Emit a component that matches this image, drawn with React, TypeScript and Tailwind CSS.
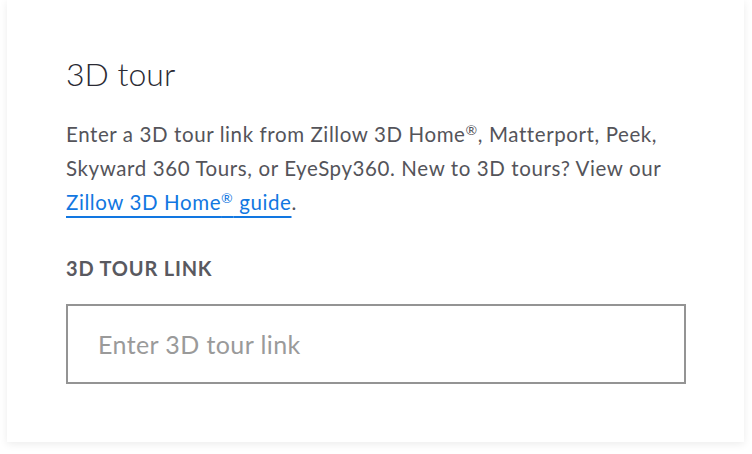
import React from 'react';

const font = { fontFamily: 'Lato, "Liberation Sans", sans-serif' };

export default function App() {
  return (
    <div className="min-h-[454px] w-[752px] bg-white" style={font}>
      <div className="ml-[7px] w-[737px] bg-white px-[59px] pt-[54px] pb-[58px] shadow-[0_2px_8px_rgba(0,0,0,0.08)]">
        <h1 className="text-[32px] font-light leading-[40px] text-[#2a2a33]">3D tour</h1>

        <p className="mt-[23px] text-[20.5px] leading-[34px] tracking-[0.6px] text-[#54545a]">
          Enter a 3D tour link from Zillow 3D Home<sup className="text-[14px]">®</sup>, Matterport, Peek,
          <br />
          Skyward 360 Tours, or EyeSpy360. New to 3D tours? View our
          <br />
          <a
            href="#"
            className="text-[#1277e1] underline decoration-2 underline-offset-[6px]"
          >
            Zillow 3D Home<sup className="text-[14px]">®</sup> guide
          </a>
          .
        </p>

        <label className="mt-[37px] block text-[20px] font-bold leading-[24px] tracking-[0.8px] text-[#595960]">
          3D TOUR LINK
        </label>

        <input
          type="text"
          placeholder="Enter 3D tour link"
          className="mt-[24px] block h-[80px] w-[620px] border-2 border-[#949494] bg-white px-[30px] text-[25px] tracking-[0.4px] text-[#2a2a33] outline-none placeholder:text-[#9a9a9a]"
        />
      </div>
    </div>
  );
}
